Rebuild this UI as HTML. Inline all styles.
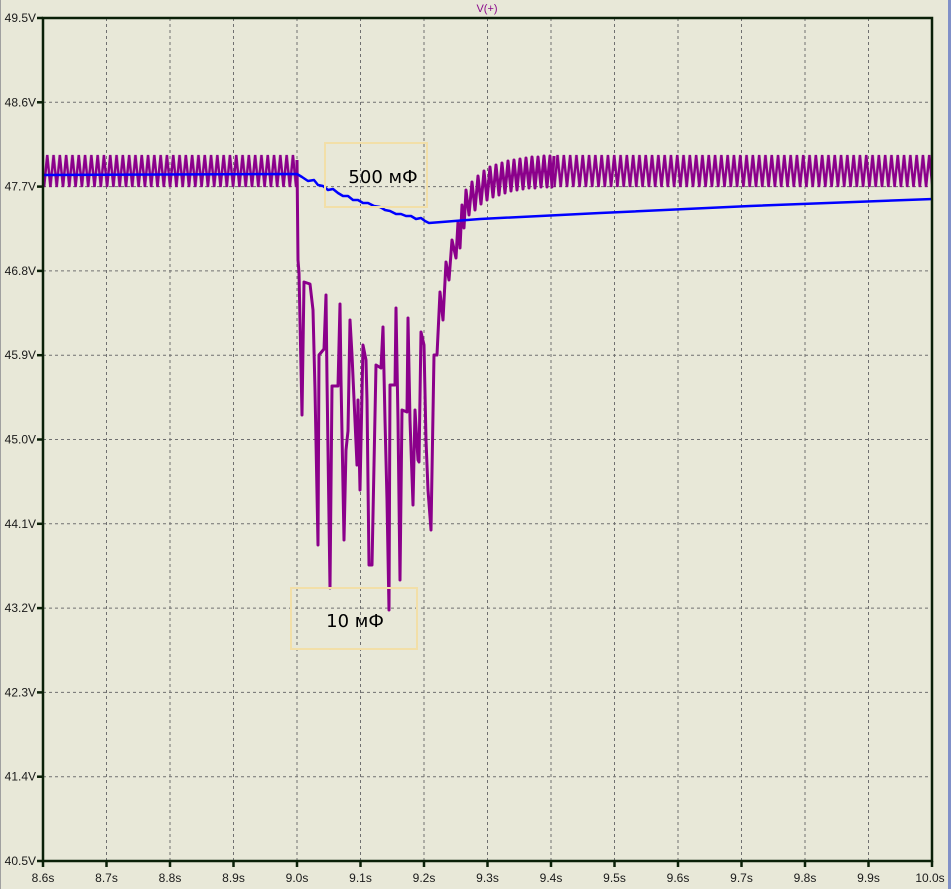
<!DOCTYPE html>
<html><head><meta charset="utf-8"><style>
html,body{margin:0;padding:0;background:#e8e8d8;}
svg{display:block;}
text{font-family:"Liberation Sans",sans-serif;font-size:12px;fill:#1a1a1a;}
</style></head><body>
<svg id="s" width="951" height="889" xmlns="http://www.w3.org/2000/svg">
<defs>
<pattern id="zz" patternUnits="userSpaceOnUse" x="0" y="153" width="6.3" height="36">
<path d="M-3.15,2 L0,34 L3.15,2 L6.3,34 L9.45,2" fill="none" stroke="#8b008b" stroke-width="2.5"/>
</pattern>
</defs>
<rect x="0" y="0" width="951" height="889" fill="#e8e8d8"/>
<line x1="0.5" y1="0" x2="0.5" y2="889" stroke="#a0a0a0"/>
<line x1="949.5" y1="0" x2="949.5" y2="889" stroke="#8090c8" stroke-width="3"/>
<g id="grid" stroke="#707070" stroke-width="1" stroke-dasharray="3,3"></g>
<g id="lab"></g>
<text x="487" y="12" text-anchor="middle" style="font-size:11px;fill:#8b0a8b">V(+)</text>
<rect x="44" y="153" width="253" height="36" fill="url(#zz)"/>
<rect x="554" y="153" width="377" height="36" fill="url(#zz)"/>
<path fill="none" stroke="#8b008b" stroke-width="3" stroke-linejoin="round" d="M297,160 L298,260 L299,273 L302,415 L304,282 L310,284 L313,310 L315,390 L318,545 L319,355 L324,349 L326,295 L327,380 L330,588 L332,386 L338,386 L340,304 L341,380 L344,540 L346,450 L348,431 L350,320 L352,355 L357,465 L358,400 L360,490 L363,345 L366,360 L367,400 L369,565 L372,565 L376,365 L381,368 L383,327 L385,420 L387,500 L389,610 L390,385 L395,385 L396,308 L398,420 L400,580 L402,410 L407,412 L408,318 L410,420 L413,505 L415,410 L418,460 L419,462 L421,332 L424,345 L426,440 L428,490 L431,530 L434,355 L437,355 L440,292 L443,320 L446,262 L449,280 L452,240 L456,258 L458,222 L460,248 L462,205 L464,228 L466,190 L469,215 L472,182 L475,210 L478,176 L481,204 L484,171 L487,200 L490,167 L493,197 L496,165 L499,195 L502,163 L505,193 L508,161 L511,191 L514,160 L517,190 L520,159 L523,189 L526,158 L529,188 L532,157 L535,188 L538,157 L541,187 L544,156 L547,187 L550,156 L552,187 L554,156"/>
<path fill="none" stroke="#0000ff" stroke-width="2.5" stroke-linejoin="round" d="M43,175 L297,174 L302,177 L308,181 L314,180 L318,185 L323,186 L328,190 L333,189 L338,193 L343,196 L348,196 L353,200 L358,200 L363,203 L368,203 L374,206 L380,207 L385,210 L390,211 L396,214 L401,214 L406,216 L411,216 L416,219 L421,218 L425,221 L429,223 L480,219 L600,213 L750,206 L933,199"/>
<rect x="325" y="143" width="102" height="64" fill="none" stroke="#f2dfa8" stroke-width="2"/>
<text x="383" y="183" text-anchor="middle" style="font-size:18px;fill:#000;font-family:'DejaVu Sans',sans-serif">500 мФ</text>
<rect x="291" y="588" width="126" height="61" fill="none" stroke="#f2dfa8" stroke-width="2"/>
<text x="355" y="627" text-anchor="middle" style="font-size:18px;fill:#000;font-family:'DejaVu Sans',sans-serif">10 мФ</text>
<rect x="43" y="18" width="889" height="843" fill="none" stroke="#0a2008" stroke-width="2.5"/>
</svg>
<script>
var ns="http://www.w3.org/2000/svg";
function el(p,t,a,txt){var e=document.createElementNS(ns,t);for(var k in a)e.setAttribute(k,a[k]);if(txt)e.textContent=txt;document.getElementById(p).appendChild(e);}
var ys=["49.5","48.6","47.7","46.8","45.9","45.0","44.1","43.2","42.3","41.4","40.5"];
for(var i=0;i<11;i++){var y=18+i*84.3;
 if(i>0&&i<10)el("grid","line",{x1:43,y1:y,x2:932,y2:y});
 el("lab","line",{x1:37,y1:y,x2:43,y2:y,stroke:"#0a2008","stroke-width":2.5});
 el("lab","text",{x:36,y:y+4,"text-anchor":"end"},ys[i]+"V");}
var xs=["8.6s","8.7s","8.8s","8.9s","9.0s","9.1s","9.2s","9.3s","9.4s","9.5s","9.6s","9.7s","9.8s","9.9s","10.0s"];
for(var j=0;j<15;j++){var xx=43+j*63.5;
 if(j>0&&j<14)el("grid","line",{x1:xx,y1:18,x2:xx,y2:861});
 el("lab","line",{x1:xx,y1:861,x2:xx,y2:867,stroke:"#0a2008","stroke-width":2.5});
 el("lab","text",{x:(j==14?xx-2:xx),y:882,"text-anchor":"middle"},xs[j]);}
</script>
</body></html>
